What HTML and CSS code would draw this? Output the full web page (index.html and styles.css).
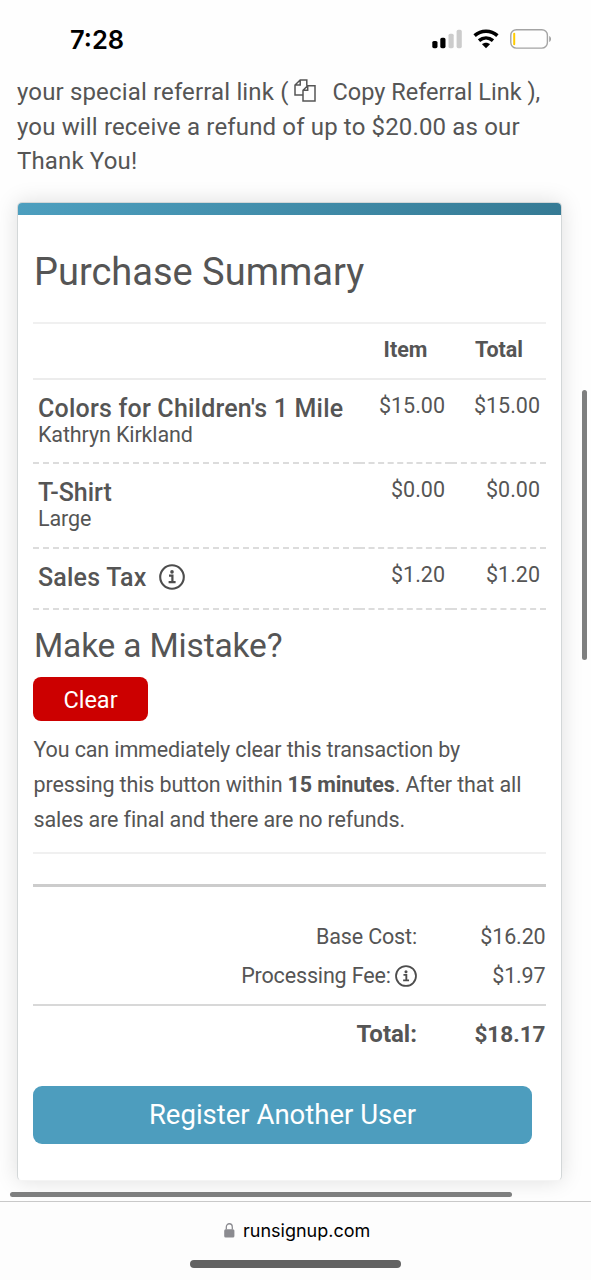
FILE: index.html
```html
<!DOCTYPE html>
<html lang="en">
<head>
<meta charset="utf-8">
<title>Purchase Summary</title>
<link rel="stylesheet" href="styles.css">
</head>
<body>
<div class="screen">
  <header class="status">
    <span class="clock">7:28</span>
    <span class="status-icons">
      <svg width="31" height="20" viewBox="0 0 31 20">
        <rect x="0.3" y="12" width="5.2" height="7.2" rx="1.6" fill="#000"/>
        <rect x="8.3" y="8.8" width="5.2" height="10.4" rx="1.6" fill="#000"/>
        <rect x="16.5" y="4.7" width="5.2" height="14.5" rx="1.6" fill="#ccc"/>
        <rect x="24.6" y="0.8" width="5.2" height="18.4" rx="1.6" fill="#ccc"/>
      </svg>
      <svg class="wifi" width="26" height="20" viewBox="0 0 26 20">
        <path d="M1.6 6.6C8.2 0.8 17.8 0.8 24.4 6.6" fill="none" stroke="#000" stroke-width="3.6"/>
        <path d="M6 11.6C10.2 8 15.8 8 20 11.6" fill="none" stroke="#000" stroke-width="3.5"/>
        <path d="M13 19.2L9 15.2C11.2 13.2 14.8 13.2 17 15.2Z" fill="#000"/>
      </svg>
      <svg class="battery" width="42" height="20" viewBox="0 0 42 20">
        <rect x="0.8" y="0.7" width="36.6" height="18.4" rx="5.6" fill="none" stroke="#a4a4a4" stroke-width="1.4"/>
        <rect x="3.2" y="3.8" width="2" height="12.4" rx="1" fill="#fc0"/>
        <path d="M39.2 7C41.6 7.8 41.6 12.2 39.2 13Z" fill="#a0a0a0"/>
      </svg>
    </span>
  </header>

  <main class="page">
    <p class="intro">your special referral link (<svg class="copy" width="22" height="23" viewBox="0 0 22 23"><path d="M8.5 16H1V6L6.2 1H12.8V6.8M6.2 1V6H1M9 11.3L13.7 6.8H21V22H9ZM13.7 6.8V11.3H9" fill="none" stroke="#555" stroke-width="1.5"/></svg><span class="copy-link">Copy Referral Link ),</span><br>you will receive a refund of up to $20.00 as our<br>Thank You!</p>

    <section class="card">
      <div class="stripe"></div>
      <div class="content">
        <h1 class="title">Purchase Summary</h1>
        <div class="items">
          <div class="th"></div><div class="th">Item</div><div class="th">Total</div>
          <div class="td"><b class="name long">Colors for Children's 1 Mile</b><span class="sub">Kathryn Kirkland</span></div>
          <div class="td num">$15.00</div><div class="td num">$15.00</div>
          <div class="td"><b class="name">T-Shirt</b><span class="sub">Large</span></div>
          <div class="td num">$0.00</div><div class="td num">$0.00</div>
          <div class="td tax"><b class="name long">Sales Tax</b><svg class="info" width="26" height="26" viewBox="0 0 26 26"><circle cx="13" cy="13" r="11.8" fill="none" stroke="#4d4d4d" stroke-width="2.1"/><circle cx="13" cy="7.9" r="1.8" fill="#4d4d4d"/><path d="M10 11.6H13.4V18M9.6 18.2H16.6" fill="none" stroke="#4d4d4d" stroke-width="2.2"/></svg></div>
          <div class="td num">$1.20</div><div class="td num">$1.20</div>
        </div>

        <h2 class="mistake">Make a Mistake?</h2>
        <button class="clear">Clear</button>
        <p class="note">You can immediately clear this transaction by<br>pressing this button within <b>15 minutes</b>. After that all<br>sales are final and there are no refunds.</p>
        <div class="thick"></div>

        <div class="sums">
          <div class="sum"><span>Base Cost:</span><span>$16.20</span></div>
          <div class="sum"><span>Processing Fee: <svg class="info-sm" width="22" height="22" viewBox="0 0 26 26"><circle cx="13" cy="13" r="11.8" fill="none" stroke="#4d4d4d" stroke-width="2.1"/><circle cx="13" cy="7.9" r="1.8" fill="#4d4d4d"/><path d="M10 11.6H13.4V18M9.6 18.2H16.6" fill="none" stroke="#4d4d4d" stroke-width="2.2"/></svg></span><span>$1.97</span></div>
          <div class="sum total"><span>Total:</span><span class="amount">$18.17</span></div>
        </div>
        <button class="register">Register Another User</button>
      </div>
    </section>
    <div class="hscroll"></div>
    <div class="vscroll"></div>
  </main>

  <footer class="browser-bar">
    <div class="address"><svg width="11" height="15" viewBox="0 0 11 15"><rect x="0.2" y="6.2" width="10.2" height="8.4" rx="1.5" fill="#8b8b90"/><path d="M2.3 6.5V4.2C2.3 -0.4 8.3 -0.4 8.3 4.2V6.5" fill="none" stroke="#8b8b90" stroke-width="1.3"/></svg><span>runsignup.com</span></div>
    <div class="home"></div>
  </footer>
</div>
</body>
</html>
```
FILE: styles.css
```css
* { box-sizing: border-box; }
body { margin: 0; background: #fefefe; }
.screen {
  position: relative;
  width: 591px;
  height: 1280px;
  overflow: hidden;
  display: flex;
  flex-direction: column;
  font-family: Roboto, "Liberation Sans", sans-serif;
  color: #555;
  white-space: nowrap;
}
h1, h2, p { margin: 0; font-weight: 400; }
button { border: 0; display: block; font-family: inherit; color: #fff; padding: 0; }

.status {
  height: 75px;
  flex: none;
  padding: 23px 39px 0 70px;
  display: flex;
  justify-content: space-between;
}
.clock {
  font: 600 25.5px/34px Inter, sans-serif;
  color: #000;
}
.status-icons { display: flex; padding-top: 6px; }
.wifi { margin-left: 10px; }
.battery { margin-left: 11px; }

.page { height: 1126px; flex: none; }
.intro {
  height: 127px;
  padding-left: 17px;
  font-size: 24px;
  line-height: 34.7px;
  letter-spacing: 0.15px;
}
.copy { margin: 0 17px 0 5px; vertical-align: -2px; }
.copy-link { font-size: 23.5px; letter-spacing: 0; }

.card {
  width: 545px;
  height: 979px;
  margin-left: 17px;
  border: 1px solid #d3d7d8;
  border-bottom-color: #f4f4f4;
  border-radius: 5px;
  overflow: hidden;
  background: #fff;
  box-shadow: 0 0 22px rgba(0, 0, 0, 0.13);
}
.stripe { height: 12px; background: linear-gradient(135deg, #4d9fbf, #357a94); }
.content { padding: 0 15px; }
.title {
  height: 107px;
  padding: 34px 0 0 1px;
  font-size: 38px;
  line-height: 46px;
}
.items {
  display: grid;
  grid-template-columns: 326px 92px 95px;
  grid-template-rows: 58px 84px 85px 61px;
}
.th {
  border-top: 2px solid #f0f0f0;
  border-bottom: 2px solid #ececec;
  padding-left: 1px;
  font-size: 21.5px;
  font-weight: 700;
  line-height: 52px;
  text-align: center;
}
.td {
  border-bottom: 2px dashed #dcdcdc;
  padding: 14px 5px 0;
  font-size: 21.5px;
  line-height: 26px;
  letter-spacing: -0.12px;
}
.num { text-align: right; padding: 13px 6px 0 0; letter-spacing: 0; }
.name { display: block; font-size: 25px; line-height: 30px; font-weight: 500; letter-spacing: 0; }
.long { letter-spacing: 0.21px; }
.sub { display: block; line-height: 22px; }
.tax { display: flex; align-items: flex-start; }
.info { margin: 1px 0 0 13px; }

.mistake { padding: 15px 0 0 1px; font-size: 33.5px; line-height: 42px; letter-spacing: -0.17px; }
.clear {
  margin-top: 10px;
  width: 115px;
  height: 44px;
  border-radius: 8px;
  background: #c00;
  padding-top: 1px;
  font-size: 23.5px;
}
.note {
  margin-top: 11px;
  height: 122px;
  border-bottom: 2px solid #f0f0f0;
  padding-left: 0.5px;
  font-size: 21.5px;
  line-height: 35px;
  letter-spacing: -0.13px;
}
.thick { height: 3px; margin-top: 30px; background: #ccc; }
.sums { padding-top: 30px; }
.sum {
  display: grid;
  grid-template-columns: 384px 1fr;
  height: 39px;
  padding-right: 0.5px;
  line-height: 39px;
  font-size: 21.5px;
  letter-spacing: -0.15px;
  text-align: right;
}
.total {
  margin-top: 9px;
  height: 59px;
  border-top: 2px solid #d8d8d8;
  line-height: 57px;
  font-size: 24px;
  font-weight: 700;
  letter-spacing: 0;
}
.amount { font-size: 22.5px; line-height: 56px; }
.info-sm { vertical-align: -4px; margin-left: -1px; }
.register {
  width: 499px;
  height: 58px;
  margin-top: 23px;
  border-radius: 9px;
  background: #4d9dbe;
  padding-bottom: 2px;
  font-size: 27.5px;
}
.hscroll {
  width: 502px;
  height: 5px;
  margin: 11px 0 0 10px;
  border-radius: 3px;
  background: #7e7f7f;
  position: relative;
}
.vscroll {
  position: absolute;
  left: 582px;
  top: 390px;
  width: 5px;
  height: 270px;
  border-radius: 3px;
  background: #7e7f7f;
}
.browser-bar {
  position: relative;
  flex: 1;
  border-top: 1px solid #c9c9c9;
  background: #fdfdfd;
}
.address {
  display: flex;
  padding: 16px 0 0 224px;
  font: 400 18px/26px Inter, sans-serif;
  color: #000;
}
.address svg { margin: 5px 8px 0 0; }
.home {
  width: 211px;
  height: 8px;
  margin: 16px 0 0 190px;
  border-radius: 4px;
  background: #626262;
}
```
